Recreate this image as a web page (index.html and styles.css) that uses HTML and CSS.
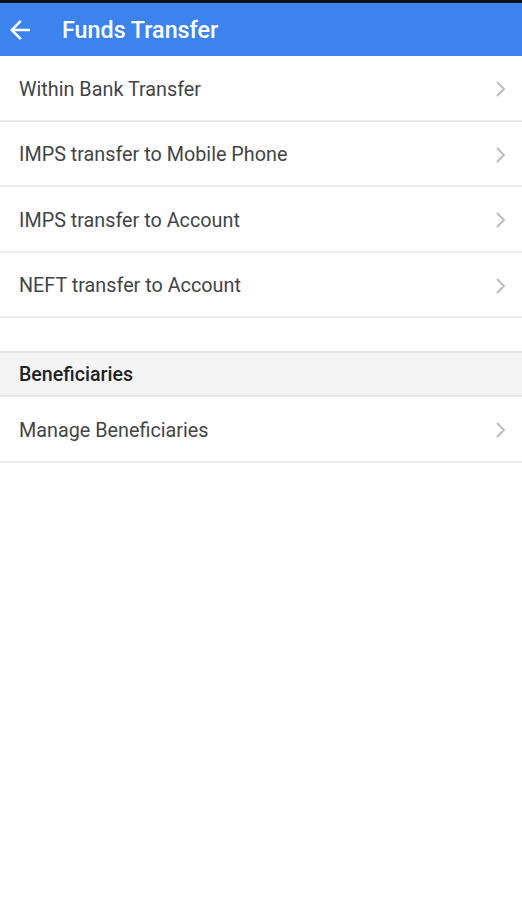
FILE: index.html
```html
<!DOCTYPE html>
<html>
<head>
  <title>Funds Transfer</title>
  <link rel="stylesheet" href="styles.css">
</head>
<body>
  <div class="statusbar"></div>
  <div class="toolbar">
    <svg class="back" width="30" height="30" viewBox="0 0 24 24">
      <path d="M20 11H7.83l5.59-5.59L12 4l-8 8 8 8 1.41-1.41L7.83 13H20v-2z" fill="#fff"/>
    </svg>
    <h1>Funds Transfer</h1>
  </div>
  <div class="list">
    <div class="item"><span>Within Bank Transfer</span><svg class="chev" width="12" height="18" viewBox="0 0 12 18"><path d="M2 2l7 7-7 7" fill="none" stroke="#bdbdbd" stroke-width="2"/></svg></div>
    <div class="item"><span>IMPS transfer to Mobile Phone</span><svg class="chev" width="12" height="18" viewBox="0 0 12 18"><path d="M2 2l7 7-7 7" fill="none" stroke="#bdbdbd" stroke-width="2"/></svg></div>
    <div class="item"><span>IMPS transfer to Account</span><svg class="chev" width="12" height="18" viewBox="0 0 12 18"><path d="M2 2l7 7-7 7" fill="none" stroke="#bdbdbd" stroke-width="2"/></svg></div>
    <div class="item"><span>NEFT transfer to Account</span><svg class="chev" width="12" height="18" viewBox="0 0 12 18"><path d="M2 2l7 7-7 7" fill="none" stroke="#bdbdbd" stroke-width="2"/></svg></div>
  </div>
  <div class="section">Beneficiaries</div>
  <div class="list">
    <div class="item"><span>Manage Beneficiaries</span><svg class="chev" width="12" height="18" viewBox="0 0 12 18"><path d="M2 2l7 7-7 7" fill="none" stroke="#bdbdbd" stroke-width="2"/></svg></div>
  </div>
</body>
</html>
```
FILE: styles.css
```css
body {
  font-family: Roboto, "Liberation Sans", sans-serif;
  margin: 0;
  padding: 0;
  background-color: #fff;
}
.statusbar {
  height: 3px;
  background-color: #111;
}
.toolbar {
  height: 53px;
  background-color: #3d83ee;
  display: flex;
  align-items: center;
  padding-left: 5px;
}
.back {
  display: block;
}
.toolbar h1 {
  margin: 0 0 0 27px;
  color: #fff;
  font-size: 23.3px;
  font-weight: 500;
}
.item {
  box-sizing: border-box;
  height: 65.5px;
  padding: 3px 15px 0 19px;
  border-bottom: 2px solid #ebebeb;
  display: flex;
  align-items: center;
  justify-content: space-between;
  font-size: 19.8px;
  color: #444;
}
.chev {
  display: block;
}
.section {
  margin-top: 33px;
  height: 42px;
  border-top: 2px solid #e6e6e6;
  border-bottom: 2px solid #e6e6e6;
  background-color: #f4f4f4;
  display: flex;
  align-items: center;
  padding-left: 19px;
  font-size: 19.6px;
  font-weight: 500;
  color: #222;
}
```
